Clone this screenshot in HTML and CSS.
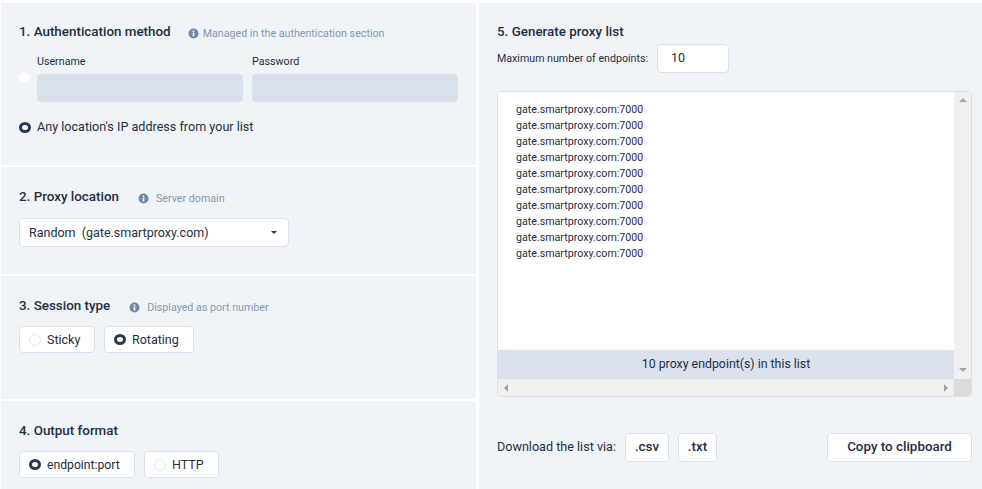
FILE: index.html
```html
<!DOCTYPE html>
<html lang="en">
<head>
    <meta charset="UTF-8">
    <title>Proxy setup</title>
    <link rel="stylesheet" href="styles.css">
</head>
<body>
    <div class="page">
        <div class="left-col">
            <section class="panel panel-auth">
                <div class="panel-head">
                    <h3>1. Authentication method</h3>
                    <span class="hint hint-auth">
                        <svg class="info" viewBox="0 0 12 12"><circle cx="6" cy="6" r="5.5"/><rect x="5.1" y="5" width="1.8" height="4.2" fill="#f0f4f8"/><rect x="5.1" y="2.7" width="1.8" height="1.6" fill="#f0f4f8"/></svg>
                        Managed in the authentication section
                    </span>
                </div>
                <div class="auth-row">
                    <span class="radio radio-plain"></span>
                    <div class="field">
                        <label>Username</label>
                        <div class="fake-input"></div>
                    </div>
                    <div class="field">
                        <label>Password</label>
                        <div class="fake-input"></div>
                    </div>
                </div>
                <div class="auth-ip">
                    <span class="radio radio-on"></span>
                    Any location's IP address from your list
                </div>
            </section>

            <section class="panel panel-location">
                <div class="panel-head">
                    <h3>2. Proxy location</h3>
                    <span class="hint hint-location">
                        <svg class="info" viewBox="0 0 12 12"><circle cx="6" cy="6" r="5.5"/><rect x="5.1" y="5" width="1.8" height="4.2" fill="#f0f4f8"/><rect x="5.1" y="2.7" width="1.8" height="1.6" fill="#f0f4f8"/></svg>
                        Server domain
                    </span>
                </div>
                <div class="select">
                    <span>Random&nbsp; (gate.smartproxy.com)</span>
                    <span class="caret"></span>
                </div>
            </section>

            <section class="panel panel-session">
                <div class="panel-head">
                    <h3>3. Session type</h3>
                    <span class="hint hint-session">
                        <svg class="info" viewBox="0 0 12 12"><circle cx="6" cy="6" r="5.5"/><rect x="5.1" y="5" width="1.8" height="4.2" fill="#f0f4f8"/><rect x="5.1" y="2.7" width="1.8" height="1.6" fill="#f0f4f8"/></svg>
                        Displayed as port number
                    </span>
                </div>
                <div class="options">
                    <div class="option option-sticky"><span class="radio radio-off"></span>Sticky</div>
                    <div class="option option-rotating"><span class="radio radio-on"></span>Rotating</div>
                </div>
            </section>

            <section class="panel panel-format">
                <div class="panel-head">
                    <h3>4. Output format</h3>
                </div>
                <div class="options">
                    <div class="option option-endpoint"><span class="radio radio-on"></span>endpoint:port</div>
                    <div class="option option-http"><span class="radio radio-off"></span>HTTP</div>
                </div>
            </section>
        </div>

        <section class="panel panel-generate">
            <h3>5. Generate proxy list</h3>
            <div class="max-row">
                <span class="max-label">Maximum number of endpoints:</span>
                <div class="number-box">10</div>
            </div>
            <div class="list-box">
                <div class="list-main">
                    <div class="list-lines">
                        <div>gate.smartproxy.com:7000</div>
                        <div>gate.smartproxy.com:7000</div>
                        <div>gate.smartproxy.com:7000</div>
                        <div>gate.smartproxy.com:7000</div>
                        <div>gate.smartproxy.com:7000</div>
                        <div>gate.smartproxy.com:7000</div>
                        <div>gate.smartproxy.com:7000</div>
                        <div>gate.smartproxy.com:7000</div>
                        <div>gate.smartproxy.com:7000</div>
                        <div>gate.smartproxy.com:7000</div>
                    </div>
                    <div class="list-count">10 proxy endpoint(s) in this list</div>
                    <div class="hscroll">
                        <span class="arrow arrow-left"></span>
                        <span class="arrow arrow-right"></span>
                    </div>
                </div>
                <div class="vscroll">
                    <span class="arrow arrow-up"></span>
                    <span class="arrow arrow-down"></span>
                    <span class="scroll-corner"></span>
                </div>
            </div>
            <div class="download-row">
                <span class="download-label">Download the list via:</span>
                <button class="btn btn-csv">.csv</button>
                <button class="btn btn-txt">.txt</button>
                <button class="btn btn-copy">Copy to clipboard</button>
            </div>
        </section>
    </div>
</body>
</html>
```

FILE: styles.css
```css
* {
    box-sizing: border-box;
}

html, body {
    height: 100%;
}

body {
    margin: 0;
    background: #fff;
    color: #1f2f42;
    font-family: Roboto, 'Liberation Sans', sans-serif;
    font-size: 12.5px;
    overflow: hidden;
}

.page {
    display: flex;
    gap: 3px;
    height: 489px;
    padding: 3px 0 0 1px;
}

.left-col {
    display: flex;
    flex-direction: column;
    gap: 2px;
    width: 475px;
    flex-shrink: 0;
}

.panel {
    background: #f0f4f8;
}

.panel-auth {
    height: 162px;
    padding: 21px 18px 0;
}

.panel-location {
    height: 107px;
    padding: 22px 18px 0;
}

.panel-session {
    height: 123px;
    padding: 22px 18px 0;
}

.panel-format {
    flex: 1;
    padding: 22px 18px 0;
}

.panel-generate {
    flex: 1;
    padding: 21px 10px 0 18px;
}

h3 {
    margin: 0;
    font-size: 13.4px;
    font-weight: 500;
    line-height: 16px;
    color: #1f2f42;
}

.panel-head {
    display: flex;
    align-items: center;
    height: 16px;
}

.hint {
    display: flex;
    align-items: center;
    font-size: 10.7px;
    color: #829ab1;
    padding-top: 2px;
}

.hint-auth {
    margin-left: 17px;
}

.hint-location,
.hint-session {
    margin-left: 19px;
}

.info {
    width: 11px;
    height: 11px;
    fill: #6f8aa6;
    margin-right: 4px;
}

.hint-location .info,
.hint-session .info {
    margin-right: 7px;
}

.auth-row {
    display: flex;
    align-items: flex-start;
    gap: 9px;
    margin-top: 16px;
}

.field {
    flex-shrink: 0;
    width: 206px;
}

.field label {
    display: block;
    font-size: 10.7px;
    line-height: 12px;
    margin-bottom: 6px;
}

.fake-input {
    height: 28px;
    background: #d9e2ec;
    border-radius: 4px;
}

.radio {
    display: inline-block;
    flex-shrink: 0;
    width: 12px;
    height: 12px;
    border-radius: 50%;
}

.radio-plain {
    width: 11px;
    height: 10px;
    background: #fff;
    margin: 16px -2px 0 0;
}

.radio-off {
    background: #fff;
    border: 1px solid #e1e8ef;
}

.radio-on {
    height: 11px;
    background: #fff;
    border: 3px solid #243b53;
}

.auth-ip {
    display: flex;
    align-items: center;
    gap: 6px;
    margin-top: 17px;
    font-size: 12.6px;
    line-height: 16px;
}

.select {
    display: flex;
    align-items: center;
    justify-content: space-between;
    width: 270px;
    height: 29px;
    margin-top: 13px;
    padding: 0 11px 0 9px;
    background: #fff;
    border: 1px solid #d9e2ec;
    border-radius: 4px;
}

.caret {
    width: 0;
    height: 0;
    border-left: 3px solid transparent;
    border-right: 3px solid transparent;
    border-top: 3px solid #243b53;
}

.options {
    display: flex;
    gap: 9px;
    margin-top: 12px;
}

.option {
    display: flex;
    align-items: center;
    height: 27px;
    padding-left: 9px;
    background: #fff;
    border: 1px solid #d9e2ec;
    border-radius: 4px;
}

.option .radio {
    margin-right: 6px;
}

.option-sticky {
    width: 76px;
}

.option-rotating {
    width: 90px;
}

.option-endpoint {
    width: 116px;
    font-size: 12.2px;
}

.option-http {
    width: 75px;
}

.max-row {
    display: flex;
    align-items: center;
    gap: 9px;
    margin-top: 4px;
    font-size: 10.65px;
}

.max-label {
    width: 151px;
    white-space: nowrap;
}

.number-box {
    width: 72px;
    height: 29px;
    padding: 0 13px;
    line-height: 26px;
    background: #fff;
    border: 1px solid #d9e2ec;
    border-radius: 4px;
    font-size: 12.5px;
}

.list-box {
    display: flex;
    width: 475px;
    height: 306px;
    margin-top: 18px;
    border: 1px solid #d9e2ec;
    border-radius: 4px;
    overflow: hidden;
}

.list-main {
    display: flex;
    flex-direction: column;
    flex: 1;
    min-width: 0;
}

.list-lines {
    flex: 1;
    padding: 10px 18px 0;
    background: #fff;
    font-size: 10.67px;
    line-height: 16px;
}

.list-count {
    height: 29px;
    line-height: 29px;
    text-align: center;
    background: #d9e2ec;
    font-size: 12.35px;
}

.hscroll {
    display: flex;
    align-items: center;
    justify-content: space-between;
    height: 17px;
    padding: 0 6px;
    background: #f0f0f0;
}

.vscroll {
    position: relative;
    width: 17px;
    background: #f0f0f0;
}

.scroll-corner {
    position: absolute;
    left: 0;
    bottom: 0;
    width: 17px;
    height: 17px;
    background: #dcdcdc;
}

.arrow {
    display: block;
    width: 0;
    height: 0;
}

.arrow-left {
    border-top: 4px solid transparent;
    border-bottom: 4px solid transparent;
    border-right: 4px solid #a3a3a3;
}

.arrow-right {
    border-top: 4px solid transparent;
    border-bottom: 4px solid transparent;
    border-left: 4px solid #a3a3a3;
}

.arrow-up {
    position: absolute;
    top: 6px;
    left: 5px;
    border-left: 4px solid transparent;
    border-right: 4px solid transparent;
    border-bottom: 4px solid #a3a3a3;
}

.arrow-down {
    position: absolute;
    bottom: 24px;
    left: 5px;
    border-left: 4px solid transparent;
    border-right: 4px solid transparent;
    border-top: 4px solid #a3a3a3;
}

.download-row {
    display: flex;
    align-items: center;
    gap: 9px;
    margin-top: 36px;
}

.download-label {
    width: 119px;
    padding-bottom: 2px;
    font-size: 12.6px;
    white-space: nowrap;
}

.btn {
    height: 29px;
    padding: 0 0 2px;
    background: #fff;
    border: 1px solid #d9e2ec;
    border-radius: 4px;
    color: #1f2f42;
    font-family: Roboto, 'Liberation Sans', sans-serif;
    font-size: 13.4px;
    font-weight: 500;
}

.btn-csv {
    width: 44px;
}

.btn-txt {
    width: 39px;
}

.btn-copy {
    width: 145px;
    margin-left: auto;
}
```
